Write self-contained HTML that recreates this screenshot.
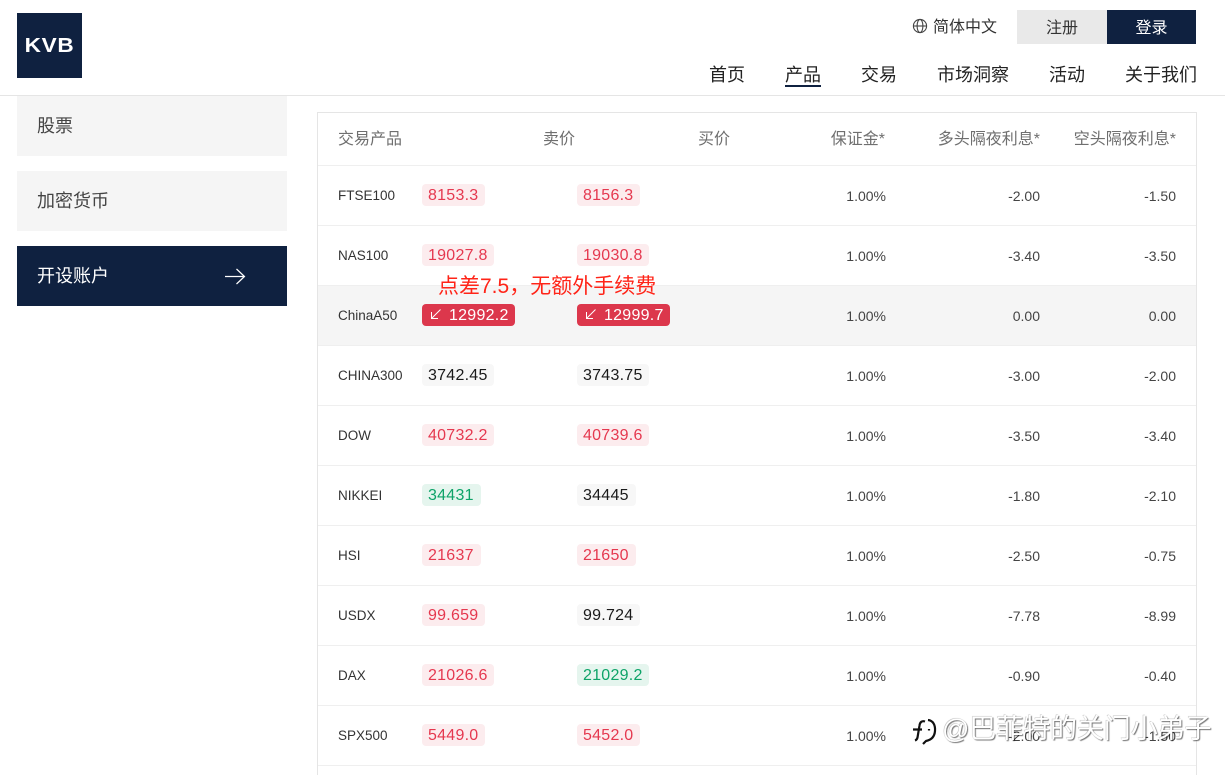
<!DOCTYPE html>
<html lang="zh-CN"><head><meta charset="utf-8"><title>KVB</title>
<style>
html,body{margin:0;padding:0;background:#fff}
#p{position:relative;width:1225px;height:775px;overflow:hidden;background:#fff;font-family:"Liberation Sans","Noto Sans CJK SC",sans-serif;color:#1a1a1a}
#p div{position:absolute;white-space:nowrap}
.nav{top:62px;height:26px;line-height:26px;font-size:18px;color:#222}
.side{left:17px;width:250px;height:60px;line-height:60px;padding-left:20px;background:#f5f5f5;font-size:18px;color:#444}
.th{top:129px;height:22px;line-height:22px;font-size:16px;color:#6f6f6f}
.hl{left:318px;width:878px;height:1px;background:#efefef}
.n{left:338px;height:20px;line-height:20px;font-size:13.5px;color:#333}
.r{height:20px;line-height:20px;font-size:14px;color:#444;text-align:right;width:90px}
.b{height:22px;line-height:24px;border-radius:4px;font-size:16px;text-indent:6px;letter-spacing:.25px}
.d{background:#fcecee;color:#e5384f}
.g{background:#e5f5ee;color:#0ea368}
.k{background:#f7f7f7;color:#1a1a1a}
.x{background:#dc374c;color:#fff;text-indent:27px}
</style></head><body><div id="p">

<div style="left:17px;top:13px;width:65px;height:65px;background:#0f2140"></div>
<div style="left:17px;top:13px;width:65px;height:65px;line-height:66px;text-align:center;color:#fff;font-size:20px;font-weight:bold;letter-spacing:.6px;transform:scaleX(1.13)">KVB</div>

<svg style="position:absolute;left:912px;top:18px" width="16" height="16" viewBox="0 0 16 16" fill="none" stroke="#444" stroke-width="1.1"><circle cx="8" cy="8" r="6.6"/><ellipse cx="8" cy="8" rx="2.9" ry="6.6"/><path d="M1.4 8h13.2"/></svg>
<div style="left:933px;top:17px;font-size:16px;line-height:22px;color:#333">简体中文</div>
<div style="left:1017px;top:10px;width:90px;height:34px;background:#e9e9e9;line-height:38px;text-align:center;font-size:16px;color:#333">注册</div>
<div style="left:1107px;top:10px;width:89px;height:34px;background:#0f2140;line-height:38px;text-align:center;font-size:16px;color:#fff">登录</div>

<div class="nav" style="left:709px">首页</div>
<div class="nav" style="left:785px">产品</div>
<div style="left:785px;top:85px;width:36px;height:2px;background:#0f2140"></div>
<div class="nav" style="left:861px">交易</div>
<div class="nav" style="left:937px">市场洞察</div>
<div class="nav" style="left:1049px">活动</div>
<div class="nav" style="left:1125px">关于我们</div>
<div style="left:0;top:95px;width:1225px;height:1px;background:#e5e5e5"></div>

<div class="side" style="top:96px">股票</div>
<div class="side" style="top:171px">加密货币</div>
<div class="side" style="top:246px;background:#0f2140;color:#fff">开设账户</div>
<svg style="position:absolute;left:224px;top:266px" width="22" height="20" viewBox="0 0 22 20" fill="none" stroke="#fff" stroke-width="1.2"><path d="M1 10.5h19M12.5 3l8 7.5-8 7.5"/></svg>

<div style="left:317px;top:112px;width:1px;height:663px;background:#e5e5e5"></div>
<div style="left:1196px;top:112px;width:1px;height:663px;background:#e5e5e5"></div>
<div style="left:317px;top:112px;width:880px;height:1px;background:#e5e5e5"></div>

<div class="th" style="left:338px">交易产品</div>
<div class="th" style="left:543px">卖价</div>
<div class="th" style="left:698px">买价</div>
<div class="th" style="left:785px;width:100px;text-align:right">保证金*</div>
<div class="th" style="left:900px;width:140px;text-align:right">多头隔夜利息*</div>
<div class="th" style="left:1036px;width:140px;text-align:right">空头隔夜利息*</div>

<div style="left:318px;top:286px;width:878px;height:59px;background:#f5f5f5"></div>
<div class="hl" style="top:165px"></div><div class="hl" style="top:225px"></div><div class="hl" style="top:285px"></div><div class="hl" style="top:345px"></div><div class="hl" style="top:405px"></div><div class="hl" style="top:465px"></div><div class="hl" style="top:525px"></div><div class="hl" style="top:585px"></div><div class="hl" style="top:645px"></div><div class="hl" style="top:705px"></div><div class="hl" style="top:765px"></div>

<!-- row 1 -->
<div class="n" style="top:186px">FTSE100</div>
<div class="b d" style="left:422px;top:184px;width:63px">8153.3</div>
<div class="b d" style="left:577px;top:184px;width:63px">8156.3</div>
<div class="r" style="left:796px;top:186px">1.00%</div><div class="r" style="left:950px;top:186px">-2.00</div><div class="r" style="left:1086px;top:186px">-1.50</div>
<!-- row 2 -->
<div class="n" style="top:246px">NAS100</div>
<div class="b d" style="left:422px;top:244px;width:72px">19027.8</div>
<div class="b d" style="left:577px;top:244px;width:72px">19030.8</div>
<div class="r" style="left:796px;top:246px">1.00%</div><div class="r" style="left:950px;top:246px">-3.40</div><div class="r" style="left:1086px;top:246px">-3.50</div>
<!-- row 3 -->
<div class="n" style="top:306px">ChinaA50</div>
<div class="b x" style="left:422px;top:304px;width:93px">12992.2</div>
<div class="b x" style="left:577px;top:304px;width:93px">12999.7</div>
<svg style="position:absolute;left:430px;top:308px" width="12" height="12" viewBox="0 0 12 12" fill="none" stroke="#fff" stroke-width="1"><path d="M10.5 1.5L1.5 10.5M1.5 4v6.500H8"/></svg>
<svg style="position:absolute;left:585px;top:308px" width="12" height="12" viewBox="0 0 12 12" fill="none" stroke="#fff" stroke-width="1"><path d="M10.5 1.5L1.5 10.5M1.5 4v6.500H8"/></svg>
<div class="r" style="left:796px;top:306px">1.00%</div><div class="r" style="left:950px;top:306px">0.00</div><div class="r" style="left:1086px;top:306px">0.00</div>
<!-- row 4 -->
<div class="n" style="top:366px">CHINA300</div>
<div class="b k" style="left:422px;top:364px;width:72px">3742.45</div>
<div class="b k" style="left:577px;top:364px;width:72px">3743.75</div>
<div class="r" style="left:796px;top:366px">1.00%</div><div class="r" style="left:950px;top:366px">-3.00</div><div class="r" style="left:1086px;top:366px">-2.00</div>
<!-- row 5 -->
<div class="n" style="top:426px">DOW</div>
<div class="b d" style="left:422px;top:424px;width:72px">40732.2</div>
<div class="b d" style="left:577px;top:424px;width:72px">40739.6</div>
<div class="r" style="left:796px;top:426px">1.00%</div><div class="r" style="left:950px;top:426px">-3.50</div><div class="r" style="left:1086px;top:426px">-3.40</div>
<!-- row 6 -->
<div class="n" style="top:486px">NIKKEI</div>
<div class="b g" style="left:422px;top:484px;width:59px">34431</div>
<div class="b k" style="left:577px;top:484px;width:59px">34445</div>
<div class="r" style="left:796px;top:486px">1.00%</div><div class="r" style="left:950px;top:486px">-1.80</div><div class="r" style="left:1086px;top:486px">-2.10</div>
<!-- row 7 -->
<div class="n" style="top:546px">HSI</div>
<div class="b d" style="left:422px;top:544px;width:59px">21637</div>
<div class="b d" style="left:577px;top:544px;width:59px">21650</div>
<div class="r" style="left:796px;top:546px">1.00%</div><div class="r" style="left:950px;top:546px">-2.50</div><div class="r" style="left:1086px;top:546px">-0.75</div>
<!-- row 8 -->
<div class="n" style="top:606px">USDX</div>
<div class="b d" style="left:422px;top:604px;width:63px">99.659</div>
<div class="b k" style="left:577px;top:604px;width:63px">99.724</div>
<div class="r" style="left:796px;top:606px">1.00%</div><div class="r" style="left:950px;top:606px">-7.78</div><div class="r" style="left:1086px;top:606px">-8.99</div>
<!-- row 9 -->
<div class="n" style="top:666px">DAX</div>
<div class="b d" style="left:422px;top:664px;width:72px">21026.6</div>
<div class="b g" style="left:577px;top:664px;width:72px">21029.2</div>
<div class="r" style="left:796px;top:666px">1.00%</div><div class="r" style="left:950px;top:666px">-0.90</div><div class="r" style="left:1086px;top:666px">-0.40</div>
<!-- row 10 -->
<div class="n" style="top:726px">SPX500</div>
<div class="b d" style="left:422px;top:724px;width:63px">5449.0</div>
<div class="b d" style="left:577px;top:724px;width:63px">5452.0</div>
<div class="r" style="left:796px;top:726px">1.00%</div><div class="r" style="left:950px;top:726px">-2.00</div><div class="r" style="left:1086px;top:726px">-1.50</div>

<div style="left:438px;top:272px;font-size:21px;line-height:30px;color:#ff2418">点差7.5，无额外手续费</div>

<svg style="position:absolute;left:910px;top:717px" width="30" height="32" viewBox="0 0 30 32" fill="none" stroke="#111" stroke-width="2.2"><path d="M3 12.500h9M15 4.500c-3-1-5 .5-5.500 4l-2 12c-.3 1.500-1 2.500-2.500 3"/><path d="M18 3c5 .5 7.500 5 7 11-.5 6-4 9-9 10l-3 3"/><path d="M19 12v1.500"/></svg>
<div style="left:942px;top:712px;font-size:27px;line-height:34px;letter-spacing:-.1px;color:#fff;text-shadow:1px 1px 1px rgba(0,0,0,.55),-.5px -.5px .5px rgba(0,0,0,.25)">@巴菲特的关门小弟子</div>

</div></body></html>
